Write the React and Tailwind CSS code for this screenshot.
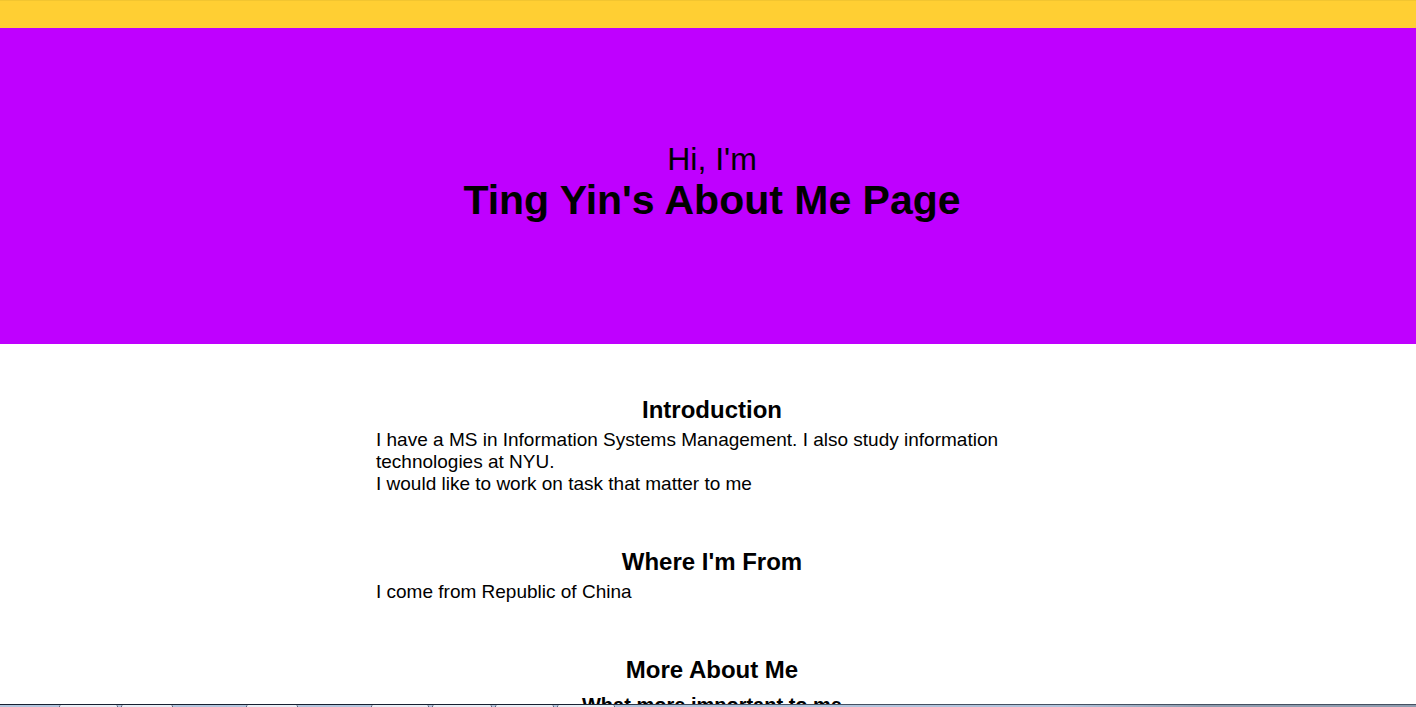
const sections = [
  {
    title: "Introduction",
    lines: [
      "I have a MS in Information Systems Management. I also study information technologies at NYU.",
      "I would like to work on task that matter to me",
    ],
  },
  { title: "Where I'm From", lines: ["I come from Republic of China"] },
];

const tab =
  "h-full shrink-0 rounded-t-xs border-x border-[#4b566b] bg-[#e9eef6]";

function Heading({ children }) {
  return (
    <h2 className="mb-[5px] text-center text-[24px] leading-[28px] font-bold">
      {children}
    </h2>
  );
}

function Taskbar() {
  return (
    <footer className="flex h-[3px] shrink-0 flex-col">
      <div className="h-px bg-linear-to-r from-[#182030] from-40% to-[#465061] to-50%" />
      <div className="flex h-[2px] gap-[3px] bg-linear-to-r from-[#b3c5dd] from-75% to-[#8e9cae] to-85% pl-[59px]">
        <div className={`${tab} w-[59px]`} />
        <div className={`${tab} mr-[70px] w-[52px]`} />
        <div className={`${tab} mr-[70px] w-[52px]`} />
        <div className={`${tab} w-[58px]`} />
        <div className={`${tab} w-[60px]`} />
        <div className={`${tab} w-[59px]`} />
        <div className={`${tab} w-[58px]`} />
      </div>
    </footer>
  );
}

export default function App() {
  return (
    <div className="flex h-screen flex-col overflow-hidden bg-white font-['Liberation_Sans',Arial,sans-serif] text-black">
      <div className="min-h-0 flex-1 overflow-hidden">
        <div className="h-7 border-t border-[#f2c530] bg-[#ffcf33]" />
        <header className="bg-[#bf00ff] pt-[113px] pb-[121px] pl-2 text-center">
          <h1>
            <span className="block text-[32px] leading-[36px]">Hi, I'm</span>
            <span className="block text-[41px] leading-[46px] font-bold">
              Ting Yin's About Me Page
            </span>
          </h1>
        </header>
        <main className="pl-2">
          <div className="mx-auto flex max-w-2xl flex-col gap-[53px] pt-[52px]">
            {sections.map(({ title, lines }) => (
              <section key={title}>
                <Heading>{title}</Heading>
                {lines.map((line) => (
                  <p key={line} className="text-[19px] leading-[22px]">
                    {line}
                  </p>
                ))}
              </section>
            ))}
            <section>
              <Heading>More About Me</Heading>
              <h3 className="pt-[4px] text-center text-[20px] leading-[24px] font-bold">
                What more important to me
              </h3>
            </section>
          </div>
        </main>
      </div>
      <Taskbar />
    </div>
  );
}
